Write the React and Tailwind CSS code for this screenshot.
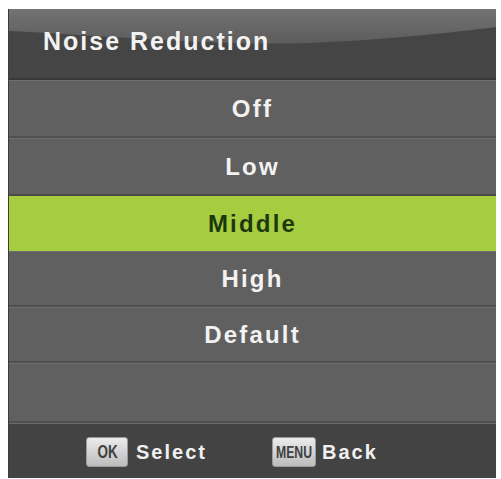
import React from 'react';

const options = [
    { label: 'Off', h: 'h-[58px]' },
    { label: 'Low', h: 'h-[58px]' },
    { label: 'Middle', h: 'h-[55px]', active: true },
    { label: 'High', h: 'h-[56px]' },
    { label: 'Default', h: 'h-[56px]' },
    { label: '', h: 'h-[60px]' },
];

const font = { fontFamily: '"Liberation Sans", Arial, sans-serif' };

const Key = ({ children, wide }) => (
    <span
        className={`flex items-center justify-center h-[30px] ${wide ? 'w-[44px]' : 'w-[42px]'} rounded-[3px] bg-gradient-to-b from-[#ececec] to-[#bcbcbc] border border-[#9a9a9a] overflow-hidden`}
    >
        {children}
    </span>
);

const App = () => {
    return (
        <div className="w-[501px] h-[479px] bg-white pt-[9px] pl-[8px]" style={font}>
            <div className="w-[488px] h-[469px] flex flex-col bg-[#606060] border-l border-[#3c3c3c] overflow-hidden">
                {/* header with the glossy arc */}
                <div className="relative h-[71px] shrink-0 bg-[#454545] border-b-2 border-[#383838]">
                    <svg className="absolute inset-0" width="488" height="69" viewBox="0 0 488 69">
                        <defs>
                            <linearGradient id="gloss" x1="0" y1="0" x2="0" y2="1">
                                <stop offset="0" stopColor="#737373" />
                                <stop offset="1" stopColor="#5c5c5c" />
                            </linearGradient>
                        </defs>
                        <path d="M0 0 H488 V18 C 440 24, 380 31, 300 34 C 200 37, 90 26, 0 22 Z" fill="url(#gloss)" />
                    </svg>
                    <div className="relative h-full flex items-center pl-[34px] pb-[4px]">
                        <span className="text-[25px] font-bold tracking-[2px] text-[#f2f2f2]">Noise Reduction</span>
                    </div>
                </div>

                {options.map((opt, i) =>
                    opt.active ? (
                        <div key={i} className={`${opt.h} shrink-0 flex items-center justify-center bg-[#a6cd3f]`}>
                            <span className="text-[24px] font-bold tracking-[2.2px] text-[#1d380f]">{opt.label}</span>
                        </div>
                    ) : (
                        <div
                            key={i}
                            className={`${opt.h} shrink-0 flex items-center justify-center bg-[#606060] border-t border-[#6f6f6f] ${options[i + 1]?.active ? 'border-b-2 border-b-[#4a4a4a]' : 'border-b-2 border-b-[#505050]'}`}
                        >
                            <span className="text-[24px] font-bold tracking-[2.2px] text-[#f2f2f2]">{opt.label}</span>
                        </div>
                    )
                )}

                {/* footer hints */}
                <div className="flex-1 flex items-center pl-[77px] pt-[2px] bg-[#434343] border-t border-[#6c6c6c]">
                    <Key>
                        <span className="inline-block text-[18px] leading-none font-bold text-[#404040] scale-x-75">OK</span>
                    </Key>
                    <span className="ml-[8px] text-[20px] font-bold tracking-[2px] text-[#f0f0f0]">Select</span>
                    <span className="ml-[65px]">
                        <Key wide>
                            <span className="inline-block text-[17px] leading-none font-bold text-[#404040] scale-x-[0.72]">MENU</span>
                        </Key>
                    </span>
                    <span className="ml-[6px] text-[20px] font-bold tracking-[2px] text-[#f0f0f0]">Back</span>
                </div>
            </div>
        </div>
    );
};

export default App;
